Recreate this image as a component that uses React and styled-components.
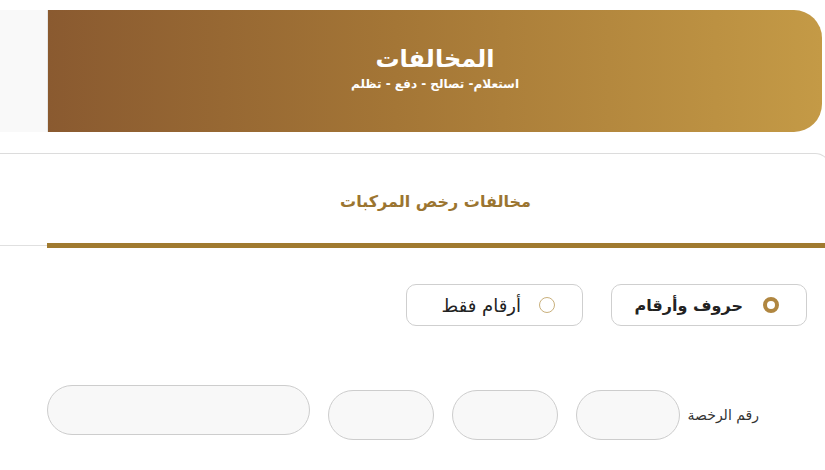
import styled, { createGlobalStyle } from 'styled-components';

const GlobalStyle = createGlobalStyle`
  * { box-sizing: border-box; }
  body {
    margin: 0;
    background: #fff;
    font-family: "DejaVu Sans", "Noto Sans", sans-serif;
    overflow: hidden;
  }
`;

const Page = styled.div`
  width: 825px;
  height: 470px;
  background: #fff;
  overflow: hidden;
`;

const TopRow = styled.div`
  display: flex;
  direction: ltr;
  margin-top: 10px;
  height: 122px;
  padding-right: 3px;
`;

const SideStrip = styled.div`
  width: 48px;
  background: #f9f9f9;
  border-right: 1px solid #e6e6e6;
`;

const Banner = styled.div`
  flex: 1;
  border-radius: 0 28px 28px 0;
  background: linear-gradient(90deg, #8a5a30 0%, #a47636 45%, #c49a46 100%);
  display: flex;
  flex-direction: column;
  align-items: center;
  justify-content: center;
  color: #fff;
  direction: rtl;
  padding-bottom: 8px;
`;

const BannerTitle = styled.h1`
  margin: 0;
  font-size: 24px;
  font-weight: 700;
  line-height: 32px;
`;

const BannerSub = styled.p`
  margin: 2px 0 0;
  font-size: 12px;
  font-weight: 700;
`;

const Card = styled.section`
  margin: 21px -6px 0 0;
  border-top: 1px solid #dcdcdc;
  border-right: 1px solid #e4e4e4;
  border-top-right-radius: 16px;
`;

const TabBar = styled.div`
  position: relative;
  height: 92px;
  display: flex;
  align-items: center;
  justify-content: center;
  padding: 0 6px 0 47px;
  border-bottom: 1px solid #e0e0e0;
`;

const TabTitle = styled.h2`
  margin: 4px 0 0;
  font-size: 16px;
  font-weight: 700;
  color: #9b7530;
  direction: rtl;
`;

const TabUnderline = styled.span`
  position: absolute;
  left: 47px;
  right: 0;
  bottom: -3px;
  height: 5px;
  background: #a07a2f;
`;

const RadioRow = styled.div`
  direction: rtl;
  display: flex;
  gap: 28px;
  padding: 38px 23px 0 0;
`;

const RadioButton = styled.label`
  width: ${p => p.$w}px;
  height: 42px;
  border: 1px solid #cfcfcf;
  border-radius: 10px;
  display: flex;
  align-items: center;
  gap: ${p => (p.$checked ? 20 : 18)}px;
  padding-right: 27px;
  font-size: ${p => (p.$checked ? 16 : 18)}px;
  font-weight: ${p => (p.$checked ? 700 : 400)};
  color: #222;
  background: #fff;
`;

const Dot = styled.span`
  width: 16px;
  height: 16px;
  border-radius: 50%;
  flex-shrink: 0;
  border: ${p => (p.$checked ? '4px solid #b08640' : '1px solid #c9b07c')};
  background: #fff;
`;

const InputRow = styled.div`
  direction: rtl;
  display: flex;
  align-items: flex-start;
  padding: 64px 71px 0 0;
`;

const Label = styled.span`
  font-size: 14px;
  color: #333;
  margin: 17px 0 0 8px;
`;

const Field = styled.input`
  width: ${p => p.$w}px;
  height: 50px;
  margin: ${p => (p.$wide ? '-5px 0 0 0' : '0 0 0 18px')};
  border: 1px solid #cdcdcd;
  border-radius: 25px;
  background: #f8f8f8;
  outline: none;
`;

export default function App() {
  return (
    <Page>
      <GlobalStyle />
      <TopRow>
        <SideStrip />
        <Banner>
          <BannerTitle>المخالفات</BannerTitle>
          <BannerSub>استعلام- تصالح - دفع - تظلم</BannerSub>
        </Banner>
      </TopRow>
      <Card>
        <TabBar>
          <TabTitle>مخالفات رخص المركبات</TabTitle>
          <TabUnderline />
        </TabBar>
        <RadioRow>
          <RadioButton $w={196} $checked>
            <Dot $checked />
            حروف وأرقام
          </RadioButton>
          <RadioButton $w={177}>
            <Dot />
            أرقام فقط
          </RadioButton>
        </RadioRow>
        <InputRow>
          <Label>رقم الرخصة</Label>
          <Field $w={104} />
          <Field $w={106} />
          <Field $w={106} />
          <Field $w={263} $wide />
        </InputRow>
      </Card>
    </Page>
  );
}
